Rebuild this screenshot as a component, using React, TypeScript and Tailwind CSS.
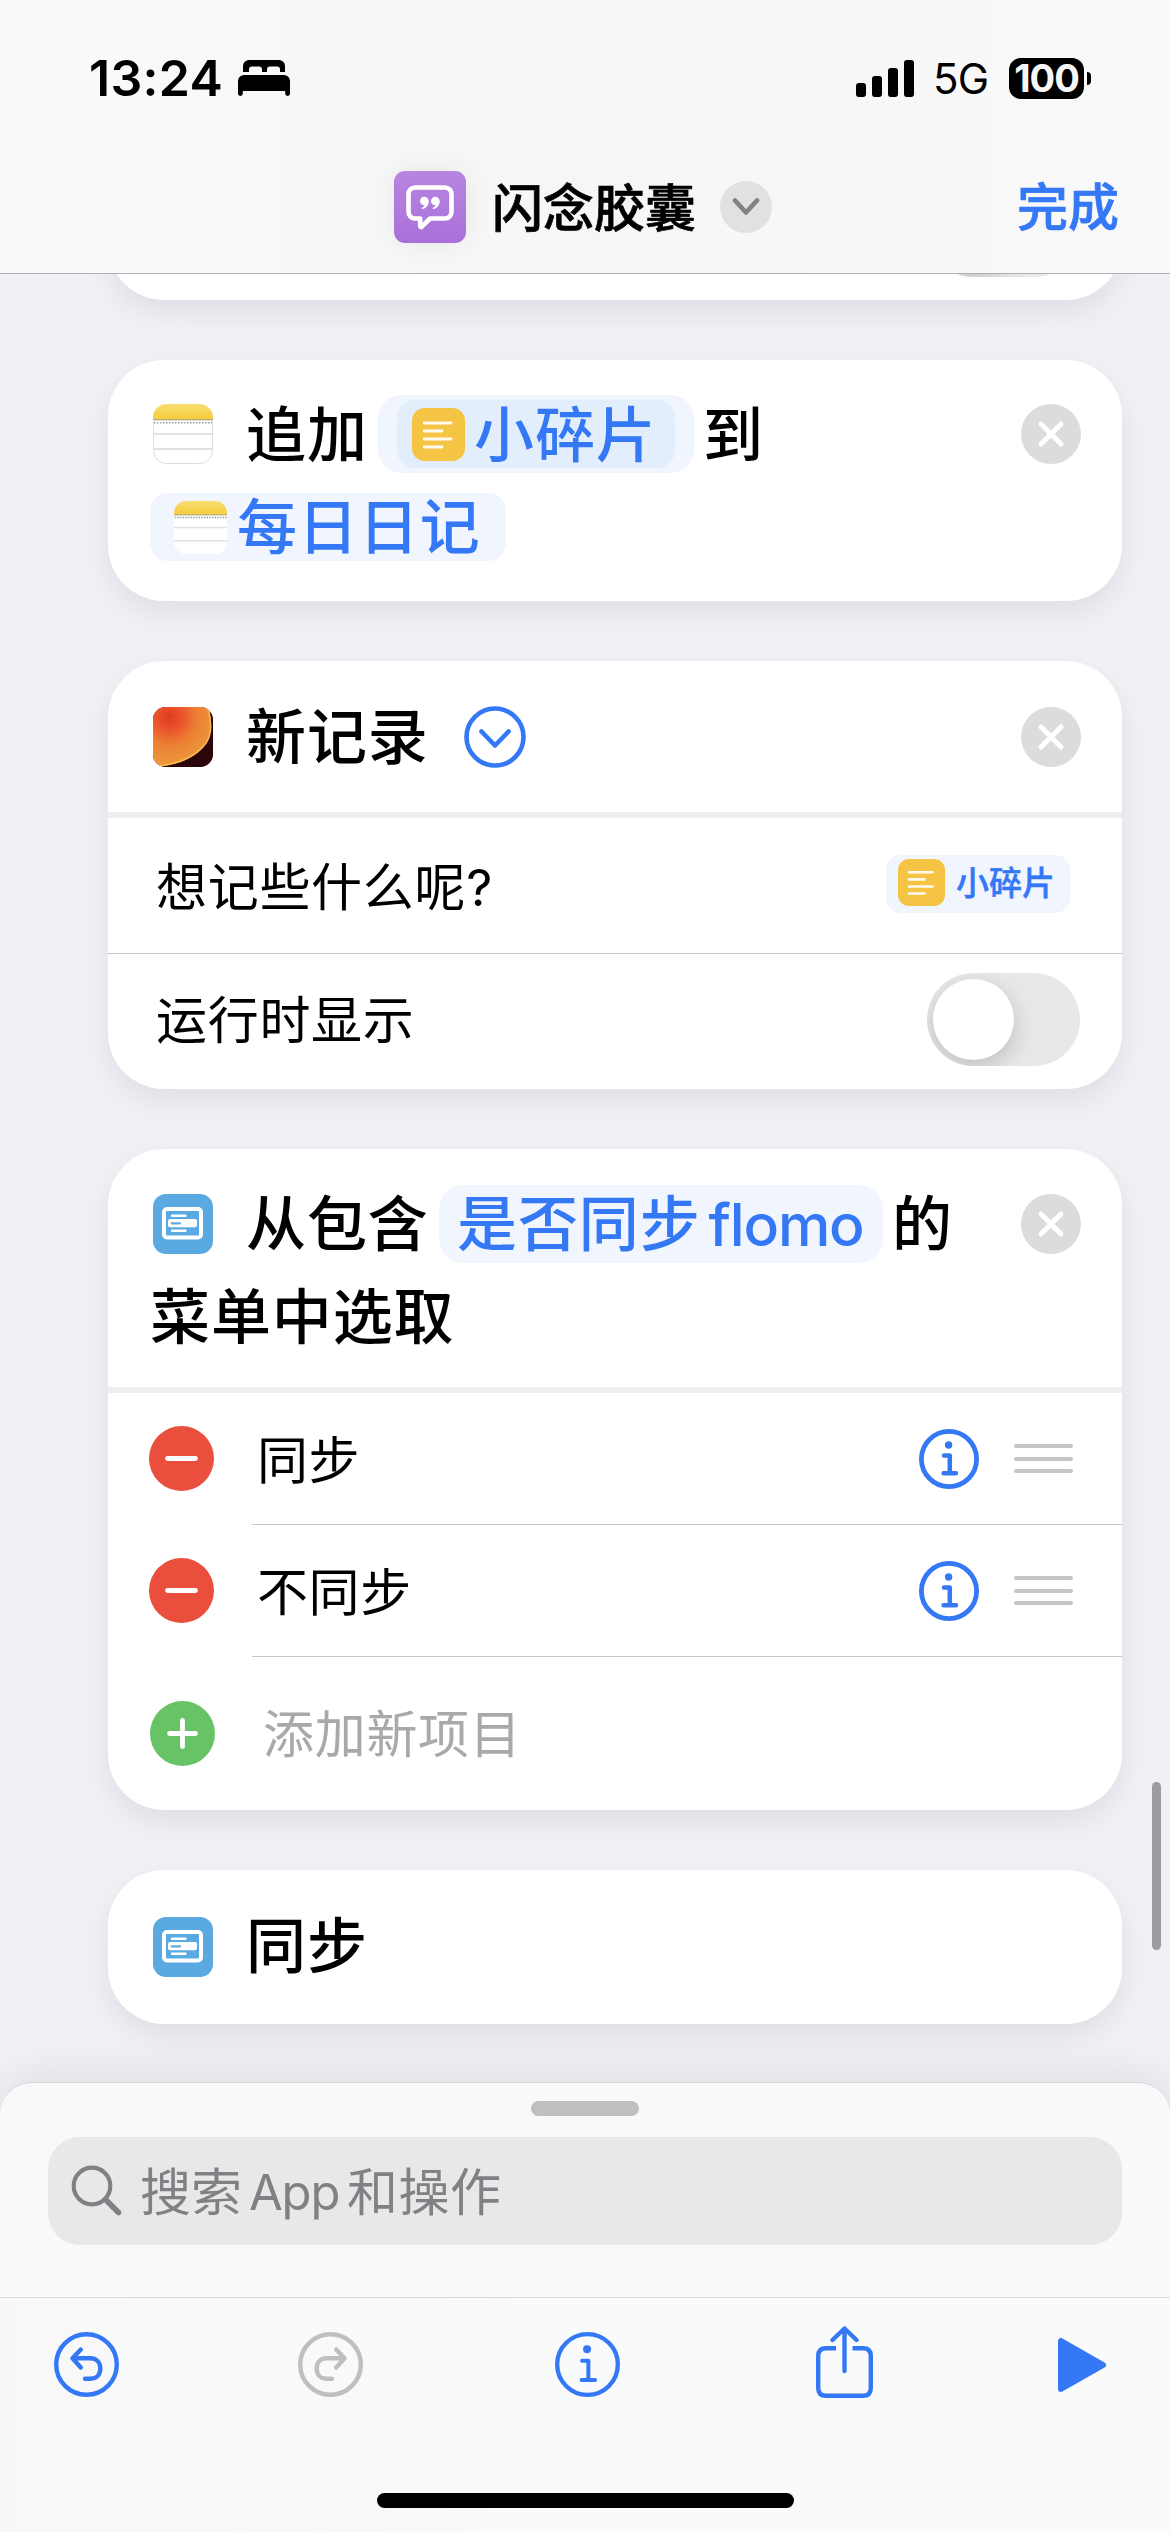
import type { ReactNode } from "react";

const BLUE = "#3478f6";

function BedIcon() {
  return (
    <svg width="52" height="36" viewBox="0 0 52 36" className="block">
      <path d="M5 12V6a6 6 0 0 1 6-6h30a6 6 0 0 1 6 6v6h-5V9.500a3 3 0 0 0-3-3h-7a3 3 0 0 0-3 3V12h-5V9.500a3 3 0 0 0-3-3h-7a3 3 0 0 0-3 3V12z" />
      <path d="M6 15h40a6 6 0 0 1 6 6v12.500a2.400 2.400 0 0 1-4.800 0V31H4.800v2.500a2.400 2.400 0 0 1-4.800 0V21a6 6 0 0 1 6-6z" />
    </svg>
  );
}

function QuoteBubbleIcon() {
  return (
    <svg width="72" height="72" viewBox="0 0 72 72" className="block" fill="none">
      <path d="M21 16.500h30a6.500 6.500 0 0 1 6.500 6.500v18a6.500 6.500 0 0 1-6.500 6.500H36l-8.200 8.200c-.8.700-1.600.300-1.600-.700v-7.500H21a6.500 6.500 0 0 1-6.500-6.500V23a6.500 6.500 0 0 1 6.500-6.500z" stroke="#fff" strokeWidth="4.600" strokeLinejoin="round" />
      <g fill="#fff">
        <circle cx="30.300" cy="30" r="4.300" />
        <path d="M34.700 30c0 4-2.200 7-5.900 8.100-1 .200-1.600-1-.7-1.600 2.200-1.100 2.900-2.100 3.400-3.500z" />
        <circle cx="41.300" cy="30" r="4.300" />
        <path d="M45.700 30c0 4-2.200 7-5.900 8.100-1 .200-1.600-1-.7-1.600 2.200-1.100 2.900-2.100 3.400-3.500z" />
      </g>
    </svg>
  );
}

function NotesIcon({ size, outlined }: { size: number; outlined?: boolean }) {
  return (
    <svg width={size} height={size} viewBox="0 0 60 60" className="block shrink-0">
      <defs>
        <linearGradient id="notesTop" x1="0" y1="0" x2="0" y2="1">
          <stop offset="0" stopColor="#fadd72" />
          <stop offset="1" stopColor="#f5cc3b" />
        </linearGradient>
        <clipPath id="notesClip">
          <rect width="60" height="60" rx="13.500" />
        </clipPath>
      </defs>
      <g clipPath="url(#notesClip)">
        <rect width="60" height="60" fill="#fff" />
        <rect width="60" height="15.500" fill="url(#notesTop)" />
        <rect y="15" width="60" height="1.300" fill="#b5a67a" />
        <path d="M1 18.700H60" stroke="#9a9a9a" strokeWidth="1.500" strokeDasharray="1.500 1.500" />
        <path d="M0 30H60M0 45H60" stroke="#e2e2e2" strokeWidth="1.800" />
      </g>
      {outlined && <path d="M.5 16V46.500A13 13 0 0 0 13.500 59.500H46.500A13 13 0 0 0 59.500 46.500V16" fill="none" stroke="#dedede" strokeWidth="1" />}
    </svg>
  );
}

function TextIcon({ size }: { size: number }) {
  return (
    <svg width={size} height={size} viewBox="0 0 53 53" className="block shrink-0">
      <rect width="53" height="53" rx="12.500" fill="#f6c444" />
      <path d="M12.300 15H39M12.300 23H30M12.300 31H39M12.300 39H30" stroke="#fffaf0" strokeWidth="2.900" strokeLinecap="round" />
    </svg>
  );
}

function FlomoIcon() {
  return (
    <svg width="60" height="60" viewBox="0 0 60 60" className="block shrink-0">
      <defs>
        <radialGradient id="orb" gradientUnits="userSpaceOnUse" cx="16" cy="10" r="56">
          <stop offset="0" stopColor="#dc3a22" />
          <stop offset="0.200" stopColor="#ea4f2a" />
          <stop offset="0.500" stopColor="#ec7f34" />
          <stop offset="1" stopColor="#eba23c" />
        </radialGradient>
        <clipPath id="orbClip">
          <rect width="60" height="60" rx="12.500" />
        </clipPath>
      </defs>
      <g clipPath="url(#orbClip)">
        <rect width="60" height="60" fill="#2a060a" />
        <path d="M-6-6H54C58 8 61 24 53 36C42 52 24 58 6 59.500L-6 60z" fill="url(#orb)" />
        <path d="M55 2C59 16 59 27 53 36C43 50 25 56.500 7 58.700" fill="none" stroke="#f6b950" strokeWidth="1.600" />
      </g>
    </svg>
  );
}

function MenuIcon() {
  return (
    <svg width="60" height="60" viewBox="0 0 60 60" className="block shrink-0">
      <rect width="60" height="60" rx="13" fill="#5aa9e1" />
      <rect x="11" y="15" width="37" height="28.500" rx="3" fill="none" stroke="#fff" strokeWidth="4" />
      <path d="M19 21.700H32.500M19 36.700H32.500" stroke="#fff" strokeWidth="2.400" strokeLinecap="round" />
      <rect x="15" y="25" width="29" height="8.300" rx="2" fill="#fff" />
      <path d="M18.700 29.300H27" stroke="#5aa9e1" strokeWidth="2.200" strokeLinecap="round" />
    </svg>
  );
}

function CloseIcon() {
  return (
    <svg width="60" height="60" viewBox="0 0 60 60" className="block shrink-0">
      <circle cx="30" cy="30" r="30" fill="#dcdcdc" />
      <path d="M20 20L40 40M40 20L20 40" stroke="#fff" strokeWidth="5" strokeLinecap="round" />
    </svg>
  );
}

function InfoIcon({ size, stroke }: { size: number; stroke: number }) {
  return (
    <svg width={size} height={size} viewBox="0 0 60 60" className="block shrink-0" fill="none" stroke={BLUE} strokeWidth={stroke}>
      <circle cx="30" cy="30" r={30 - stroke / 2} />
      <circle cx="29.600" cy="16" r="3.700" fill={BLUE} stroke="none" />
      <path d="M25 26.600H30.800V44.200M24.600 44.200H37" strokeWidth={stroke - 0.300} strokeLinecap="round" strokeLinejoin="round" />
    </svg>
  );
}

function TurnIcon({ color, flipped }: { color: string; flipped?: boolean }) {
  return (
    <svg width="65" height="65" viewBox="0 0 65 65" className={flipped ? "block -scale-x-100" : "block"} fill="none" stroke={color} strokeWidth="4.400" strokeLinecap="round" strokeLinejoin="round">
      <circle cx="32.500" cy="32.500" r="30.300" />
      <path d="M26.800 17.500L18.500 26.300L26.800 35.500M18.500 26.300H36.500C43 26.300 46.300 31 46.300 36.500C46.300 42.500 43 46.700 36.500 46.700H31" />
    </svg>
  );
}

function RoundButton({ plus }: { plus?: boolean }) {
  return (
    <svg width="65" height="65" viewBox="0 0 65 65" className="block shrink-0">
      <circle cx="32.500" cy="32.500" r="32.500" fill={plus ? "#66c466" : "#ea4f3d"} />
      <path d={plus ? "M19.500 32.500H45.500M32.500 19.500V45.500" : "M18.500 32.500H46.500"} stroke="#fff" strokeWidth="4.800" strokeLinecap="round" />
    </svg>
  );
}

function Card({ className, children }: { className: string; children?: ReactNode }) {
  return (
    <section className={`w-[1014px] shrink-0 rounded-[56px] bg-white shadow-[0_12px_30px_rgba(20,20,40,0.075)] ${className}`}>
      {children}
    </section>
  );
}

function Toggle() {
  return (
    <div className="flex h-[93px] w-[153px] items-center overflow-hidden rounded-full bg-[#e8e8e8] pl-[6px]">
      <div className="size-[81px] rounded-full bg-white shadow-[0_8px_24px_rgba(0,0,0,0.18)]" />
    </div>
  );
}

function MenuRow({ label }: { label: string }) {
  return (
    <div className="flex h-[132px] items-center pl-[41px]">
      <div className="mb-px"><RoundButton /></div>
      <div className="ml-[38px] flex h-full flex-1 items-center border-b border-[#c6c6c8] pl-[5px] pr-[49px]">
        <span className="flex-1 pt-[3px] text-[51px] leading-none tracking-[0.600px]">{label}</span>
        <InfoIcon size={60} stroke={4.8} />
        <div className="ml-[35px] flex w-[59px] flex-col gap-[8.500px]">
          <div className="h-1 rounded-full bg-[#c5c5ca]" />
          <div className="h-1 rounded-full bg-[#c5c5ca]" />
          <div className="h-1 rounded-full bg-[#c5c5ca]" />
        </div>
      </div>
    </div>
  );
}

export default function App() {
  return (
    <div className="relative flex h-[2532px] w-[1170px] flex-col overflow-hidden whitespace-nowrap bg-[#f1f0f5] font-['Inter','Noto_Sans_CJK_SC',sans-serif] text-black">
      <header className="relative z-10 h-[274px] shrink-0 border-b border-[#b1b1b4] bg-linear-to-r from-[#fafafc] via-[#f6f6f6] to-[#f9f9f9]">
        <div className="flex h-[156px] items-center pl-[89px] pr-[79px]">
          <span className="w-[149px] text-[50px] font-semibold leading-none tracking-[0.300px]">13:24</span>
          <BedIcon />
          <div className="ml-auto flex items-center">
            <div className="flex h-[37px] items-end gap-[6px]">
              <div className="h-[14px] w-[10px] rounded-[3px] bg-black" />
              <div className="h-[21px] w-[10px] rounded-[3px] bg-black" />
              <div className="h-[29px] w-[10px] rounded-[3px] bg-black" />
              <div className="h-[37px] w-[10px] rounded-[3px] bg-black" />
            </div>
            <span className="ml-[19px] w-[76px] pt-[2px] text-[42px] leading-none tracking-[-0.800px]">5G</span>
            <div className="flex h-[41px] w-[75px] items-center justify-center rounded-[12px] bg-black text-[38px] font-bold leading-none tracking-[-1px] text-[#f7f7f7]">100</div>
            <div className="ml-[3px] h-[13px] w-1 rounded-r-full bg-black" />
          </div>
        </div>
        <div className="flex h-[102px] items-center pl-[394px] pr-[51px]">
          <div className="rounded-[11px] bg-linear-to-b from-[#b785e0] to-[#aa70da] shadow-[0_0_30px_rgba(0,0,0,0.07)]">
            <QuoteBubbleIcon />
          </div>
          <h1 className="ml-[26px] pt-[2px] text-[51px] font-medium leading-none [-webkit-text-stroke:0.700px_black]">闪念胶囊</h1>
          <div className="ml-[24px] flex size-[52px] items-center justify-center rounded-full bg-[#e1e1e2]">
            <svg width="28" height="20" viewBox="0 0 28 20" fill="none">
              <path d="M3 3.500L14 15.500L25 3.500" stroke="#828285" strokeWidth="4.600" strokeLinecap="round" strokeLinejoin="round" />
            </svg>
          </div>
          <button className="ml-auto text-[51px] font-medium leading-none text-[#3478f6] [-webkit-text-stroke:0.700px_#3478f6]">完成</button>
        </div>
      </header>

      <main className="flex h-[1808px] shrink-0 flex-col pl-[108px]">
        <Card className="-mt-[128px] flex h-[154px] items-end justify-end pb-[23px] pr-[42px]">
          <Toggle />
        </Card>

        <Card className="mt-[60px] h-[241px] px-[42px] pt-[35px] text-[60px] font-medium leading-none tracking-[0.900px]">
          <div className="flex h-[78px] items-center">
            <div className="ml-[3px]"><NotesIcon size={60} outlined /></div>
            <span className="ml-[33px] w-[122px] pt-[2px]">追加</span>
            <div className="ml-[10px] flex h-[78px] w-[316px] items-center rounded-[24px] bg-[#f0f5fe] pl-[19px]">
              <div className="flex h-[68px] w-[278px] items-center rounded-[18px] bg-[#e3eefc] pl-[15px] text-[#3478f6]">
                <TextIcon size={53} />
                <span className="ml-[9px] pt-[2px]">小碎片</span>
              </div>
            </div>
            <span className="ml-[9px] pt-[2px]">到</span>
            <div className="ml-auto mr-[-1px]"><CloseIcon /></div>
          </div>
          <div className="mt-[20px] flex h-[68px] w-[356px] items-center rounded-[18px] bg-[#f0f5fe] pl-[24px] text-[#3478f6]">
            <NotesIcon size={53} />
            <span className="ml-[10px]">每日日记</span>
          </div>
        </Card>

        <Card className="mt-[60px] h-[428px]">
          <div className="flex h-[157px] items-center border-b-[6px] border-[#eeeeee] pl-[45px] pr-[41px]">
            <FlomoIcon />
            <span className="ml-[33px] w-[182px] pt-[1px] text-[60px] font-medium leading-none tracking-[0.900px]">新记录</span>
            <svg width="62" height="62" viewBox="0 0 62 62" className="ml-[36px] block" fill="none" stroke={BLUE} strokeWidth="4.600" strokeLinecap="round" strokeLinejoin="round">
              <circle cx="31" cy="31" r="28.500" />
              <path d="M17.500 25.500L31 39.500L44.500 25.500" />
            </svg>
            <div className="ml-auto"><CloseIcon /></div>
          </div>
          <div className="flex h-[136px] items-center justify-between border-b border-[#c6c6c8] pl-[48px] pr-[52px]">
            <span className="pt-[3px] text-[51px] leading-none tracking-[0.700px]">想记些什么呢?</span>
            <div className="mb-[4px] flex h-[58px] w-[184px] items-center rounded-[15px] bg-[#f0f5fe] pl-[12px]">
              <div className="mb-[3px]"><TextIcon size={47} /></div>
              <span className="ml-[11px] text-[33px] font-medium leading-none text-[#3478f6] [-webkit-text-stroke:0.500px_#3478f6]">小碎片</span>
            </div>
          </div>
          <div className="flex h-[133px] items-center justify-between pl-[48px] pr-[42px]">
            <span className="text-[51px] leading-none tracking-[0.700px]">运行时显示</span>
            <div className="mb-[2px]"><Toggle /></div>
          </div>
        </Card>

        <Card className="mt-[60px] h-[661px]">
          <div className="h-[244px] border-b-[6px] border-[#eeeeee] pl-[45px] pr-[41px] pt-[36px] text-[60px] font-medium leading-none tracking-[0.900px]">
            <div className="flex h-[78px] items-center">
              <MenuIcon />
              <span className="ml-[33px] w-[184px]">从包含</span>
              <div className="ml-[9px] flex h-[78px] w-[444px] items-center rounded-[24px] bg-[#f0f5fe] pl-[18px] text-[#3478f6]">
                <span>是否同步</span>
                <span className="ml-[8px] text-[59px] tracking-[-1.200px]">flomo</span>
              </div>
              <span className="ml-[9px]">的</span>
              <div className="ml-auto"><CloseIcon /></div>
            </div>
            <div className="-ml-[3px] mt-[24px]">菜单中选取</div>
          </div>
          <MenuRow label="同步" />
          <MenuRow label="不同步" />
          <div className="flex h-[153px] items-center pl-[42px]">
            <RoundButton plus />
            <span className="ml-[48px] pt-[2px] text-[51px] leading-none tracking-[0.700px] text-[#a9a9ab]">添加新项目</span>
          </div>
        </Card>

        <Card className="mt-[60px] flex h-[154px] items-center pl-[45px]">
          <MenuIcon />
          <span className="ml-[33px] pb-[2px] text-[60px] font-medium leading-none tracking-[0.900px]">同步</span>
        </Card>
      </main>

      <div className="absolute left-[1152px] top-[1782px] h-[168px] w-[9px] rounded-full bg-[#9c9c9e]" />

      <section className="relative h-[215px] shrink-0 rounded-t-[32px] border-t border-[#d3d3d8] bg-[#f9f9f9] px-[48px] pt-[18px] shadow-[0_-6px_40px_rgba(20,20,40,0.08)]">
        <div className="mx-auto h-[15px] w-[108px] rounded-full bg-[#bfbfc0]" />
        <div className="mt-[21px] flex h-[108px] items-center rounded-[32px] bg-[#e8e8e8] pl-[23px] text-[#818185]">
          <svg width="52" height="52" viewBox="0 0 52 52" fill="none" stroke="currentColor" strokeLinecap="round">
            <circle cx="21" cy="21" r="18.300" strokeWidth="4.200" />
            <path d="M34.500 34.500L47.500 47.500" strokeWidth="5.600" />
          </svg>
          <span className="ml-[17px] w-[100px] pt-[3px] text-[51px] leading-none">搜索</span>
          <span className="ml-[9px] w-[94px] pt-[3px] text-[49px] leading-none tracking-[-1.200px]">App</span>
          <span className="ml-[4px] pt-[3px] text-[51px] leading-none tracking-[0.500px]">和操作</span>
        </div>
      </section>

      <footer className="relative h-[235px] border-t border-[#dcdcde] bg-linear-to-r from-[#f8f8f8] via-[#f9fafb] to-[#fafafa] pt-[28px]">
        <nav className="flex h-[72px] items-center pl-[54px]">
          <div className="mt-[5px]"><TurnIcon color={BLUE} /></div>
          <div className="ml-[179px] mt-[5px]"><TurnIcon color="#bfbfc0" flipped /></div>
          <div className="ml-[192px] mt-[5px]"><InfoIcon size={65} stroke={4} /></div>
          <svg width="57" height="72" viewBox="0 0 57 72" className="ml-[196px]" fill="none" stroke={BLUE} strokeWidth="4.400">
            <path d="M20 22.300H10C5 22.300 2.200 25 2.200 30V62C2.200 67 5 69.800 10 69.800H47C52 69.800 54.800 67 54.800 62V30C54.800 25 52 22.300 47 22.300H36.500" />
            <path d="M28.500 45V2.500M16.500 14L28.500 2.500L40.500 14" strokeLinecap="round" strokeLinejoin="round" />
          </svg>
          <svg width="48" height="56" viewBox="0 0 48 56" className="ml-[185px] mt-[6px]">
            <path d="M3 4V52L45 28z" fill={BLUE} stroke={BLUE} strokeWidth="6" strokeLinejoin="round" />
          </svg>
        </nav>
        <div className="mx-auto mt-[95px] h-[15px] w-[417px] rounded-full bg-black" />
      </footer>
    </div>
  );
}
